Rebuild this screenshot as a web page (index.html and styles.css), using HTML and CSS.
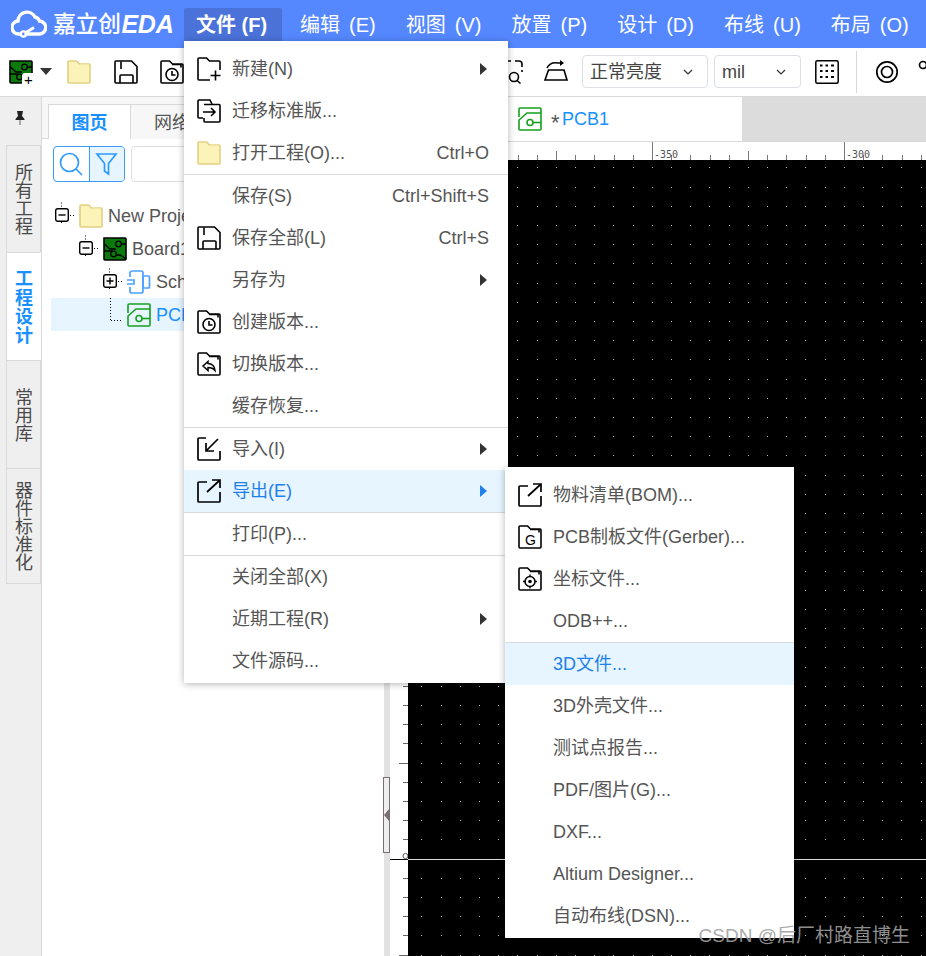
FILE: index.html
```html
<!DOCTYPE html>
<html lang="zh">
<head>
<meta charset="utf-8">
<title>嘉立创EDA</title>
<link rel="stylesheet" href="styles.css">
</head>
<body>
<svg class="sprite" width="0" height="0">
  <defs>
    <symbol id="i-folder" viewBox="0 0 24 24"><path d="M2 1h7.5l3 3H22a1 1 0 0 1 1 1v17a1 1 0 0 1-1 1H2a1 1 0 0 1-1-1V2a1 1 0 0 1 1-1z" fill="#fbf3b8" stroke="#e2cf82" stroke-width="1.6"/><path d="M12.5 4.5H22" stroke="#f3e7a5" stroke-width="1.4"/></symbol>
    <symbol id="i-new" viewBox="0 0 24 24"><path d="M13 23H2a1 1 0 0 1-1-1V2a1 1 0 0 1 1-1h7.5l3 3H22a1 1 0 0 1 1 1v8M12 4h8" fill="none" stroke="#000" stroke-width="1.6"/><path d="M18.500 13.500v10M13.500 18.500h10" stroke="#000" stroke-width="1.6"/></symbol>
    <symbol id="i-move" viewBox="0 0 24 24"><path d="M6 19H2a1 1 0 0 1-1-1V2a1 1 0 0 1 1-1h11l2 4" fill="none" stroke="#000" stroke-width="1.6"/><path d="M7 5.500h15a1 1 0 0 1 1 1V22a1 1 0 0 1-1 1H8a1 1 0 0 1-1-1v-3" fill="none" stroke="#000" stroke-width="1.6"/><path d="M6 13h12M14 9l4 4-4 4" fill="none" stroke="#000" stroke-width="1.6"/></symbol>
    <symbol id="i-save" viewBox="0 0 24 24"><path d="M2 1h15.500L23 6.500V22a1 1 0 0 1-1 1H2a1 1 0 0 1-1-1V2a1 1 0 0 1 1-1z" fill="none" stroke="#000" stroke-width="1.6"/><path d="M6 23v-7a1 1 0 0 1 1-1h11a1 1 0 0 1 1 1v7M7 1.500V9" fill="none" stroke="#000" stroke-width="1.6"/></symbol>
    <symbol id="i-fclock" viewBox="0 0 24 24"><path d="M2 1h7.500l3 3H22a1 1 0 0 1 1 1v17a1 1 0 0 1-1 1H2a1 1 0 0 1-1-1V2a1 1 0 0 1 1-1zM12 4.500h9v3" fill="none" stroke="#000" stroke-width="1.6"/><circle cx="12" cy="14.500" r="6" fill="none" stroke="#000" stroke-width="1.6"/><path d="M12 11v4h3.500" fill="none" stroke="#000" stroke-width="1.6"/></symbol>
    <symbol id="i-fback" viewBox="0 0 24 24"><path d="M2 1h7.500l3 3H22a1 1 0 0 1 1 1v17a1 1 0 0 1-1 1H2a1 1 0 0 1-1-1V2a1 1 0 0 1 1-1zM12 4.500h9v3" fill="none" stroke="#000" stroke-width="1.600"/><path d="M11 9.500l-5 4.500 5 4.500v-3c3 0 5 .5 7 3 0-4-3-7-7-7z" fill="none" stroke="#000" stroke-width="1.500"/></symbol>
    <symbol id="i-fg" viewBox="0 0 24 24"><path d="M2 1h7.500l3 3H22a1 1 0 0 1 1 1v17a1 1 0 0 1-1 1H2a1 1 0 0 1-1-1V2a1 1 0 0 1 1-1zM12 4.500h9v3" fill="none" stroke="#000" stroke-width="1.600"/></symbol>
    <symbol id="i-ftarget" viewBox="0 0 24 24"><path d="M2 1h7.500l3 3H22a1 1 0 0 1 1 1v17a1 1 0 0 1-1 1H2a1 1 0 0 1-1-1V2a1 1 0 0 1 1-1zM12 4.500h9v3" fill="none" stroke="#000" stroke-width="1.600"/><circle cx="12" cy="14.500" r="5" fill="none" stroke="#000" stroke-width="1.500"/><circle cx="12" cy="14.500" r="1.800" fill="#000"/><path d="M12 7.500v2.500M12 19v2.500M5 14.500h2.500M16.500 14.500H19" stroke="#000" stroke-width="1.400"/></symbol>
    <symbol id="i-import" viewBox="0 0 24 24"><path d="M9 1H2a1 1 0 0 0-1 1v20a1 1 0 0 0 1 1h20a1 1 0 0 0 1-1v-8" fill="none" stroke="#000" stroke-width="1.700"/><path d="M21 2L9.500 13.500M9 6v8h8" fill="none" stroke="#000" stroke-width="1.700"/></symbol>
    <symbol id="i-export" viewBox="0 0 24 24"><path d="M10 3H2a1 1 0 0 0-1 1v18a1 1 0 0 0 1 1h20a1 1 0 0 0 1-1v-9" fill="none" stroke="#000" stroke-width="1.700"/><path d="M10 13L22.500 1.500M15 1h8v8" fill="none" stroke="#000" stroke-width="1.700"/></symbol>
    <symbol id="i-pcbg" viewBox="0 0 24 24"><path d="M1 1h21a1 1 0 0 1 1 1v20a1 1 0 0 1-1 1H2a1 1 0 0 1-1-1z" fill="#0a7a0a" stroke="#000" stroke-width="1.600"/><path d="M1.500 7L7 12h6M23 7h-5M1.500 14h8M13 18h4l6 4" fill="none" stroke="#000" stroke-width="1.300"/><circle cx="15.500" cy="7" r="2.800" fill="none" stroke="#000" stroke-width="1.300"/><circle cx="10.500" cy="17" r="2.800" fill="none" stroke="#000" stroke-width="1.300"/></symbol>
    <symbol id="i-pcb" viewBox="0 0 24 24"><path d="M2 1h20a1 1 0 0 1 1 1v20a1 1 0 0 1-1 1H2a1 1 0 0 1-1-1V13l8-7h14M1 10V2a1 1 0 0 1 1-1" fill="none" stroke="#16a01e" stroke-width="1.600"/><circle cx="12" cy="15.500" r="3" fill="none" stroke="#16a01e" stroke-width="1.600"/><path d="M15 15.500h8" stroke="#16a01e" stroke-width="1.600"/></symbol>
    <symbol id="i-sch" viewBox="0 0 24 24"><path d="M3 7V3a2 2 0 0 1 2-2h9a2 2 0 0 1 2 2v18a2 2 0 0 1-2 2H5a2 2 0 0 1-2-2v-4" fill="none" stroke="#4aa3ff" stroke-width="1.700"/><path d="M0 10h7v4H0" fill="none" stroke="#4aa3ff" stroke-width="1.700"/><rect x="16" y="6" width="6.500" height="12" rx="1" fill="none" stroke="#4aa3ff" stroke-width="1.700"/></symbol>
    <symbol id="i-minus" viewBox="0 0 24 33"><path d="M6.500 3.500v4M6.500 23v3" stroke="#000" stroke-width="1" stroke-dasharray="1 2"/><rect x=".7" y="9.700" width="12.600" height="12.600" rx="2" fill="#fff" stroke="#000" stroke-width="1.400"/><path d="M3.500 16h7" stroke="#000" stroke-width="1.400"/><path d="M15 16.500h6" stroke="#000" stroke-width="1" stroke-dasharray="1 2"/></symbol>
    <symbol id="i-plus" viewBox="0 0 24 33"><path d="M6.500 3.500v4M6.500 23v3" stroke="#000" stroke-width="1" stroke-dasharray="1 2"/><rect x=".7" y="9.700" width="12.600" height="12.600" rx="2" fill="#fff" stroke="#000" stroke-width="1.400"/><path d="M3.500 16h7M7 12.500v7" stroke="#000" stroke-width="1.400"/><path d="M15 16.500h6" stroke="#000" stroke-width="1" stroke-dasharray="1 2"/></symbol>
    <symbol id="i-leaf" viewBox="0 0 24 33"><path d="M7.500 0v23M8 22.500h12" stroke="#000" stroke-width="1" stroke-dasharray="1 2" fill="none"/></symbol>
    <pattern id="dots" width="96" height="96" patternUnits="userSpaceOnUse">
      <g fill="#c4c4c4" shape-rendering="crispEdges">
        <rect x="13" y="7" width="1" height="1"/><rect x="33" y="7" width="1" height="1"/><rect x="52" y="7" width="1" height="1"/><rect x="71" y="7" width="1" height="1"/><rect x="90" y="7" width="1" height="1"/>
        <rect x="13" y="27" width="1" height="1"/><rect x="33" y="27" width="1" height="1"/><rect x="52" y="27" width="1" height="1"/><rect x="71" y="27" width="1" height="1"/><rect x="90" y="27" width="1" height="1"/>
        <rect x="13" y="46" width="1" height="1"/><rect x="33" y="46" width="1" height="1"/><rect x="52" y="46" width="1" height="1"/><rect x="71" y="46" width="1" height="1"/><rect x="90" y="46" width="1" height="1"/>
        <rect x="13" y="65" width="1" height="1"/><rect x="33" y="65" width="1" height="1"/><rect x="52" y="65" width="1" height="1"/><rect x="71" y="65" width="1" height="1"/><rect x="90" y="65" width="1" height="1"/>
        <rect x="13" y="84" width="1" height="1"/><rect x="33" y="84" width="1" height="1"/><rect x="52" y="84" width="1" height="1"/><rect x="71" y="84" width="1" height="1"/><rect x="90" y="84" width="1" height="1"/>
      </g>
    </pattern>
    <pattern id="hticks" x="52" width="192" height="18" patternUnits="userSpaceOnUse">
      <g fill="#777" shape-rendering="crispEdges">
        <rect x="0" y="0" width="1" height="18"/><rect x="19" y="13" width="1" height="5"/><rect x="38" y="13" width="1" height="5"/><rect x="58" y="13" width="1" height="5"/><rect x="77" y="13" width="1" height="5"/><rect x="96" y="9" width="1" height="9"/><rect x="115" y="13" width="1" height="5"/><rect x="134" y="13" width="1" height="5"/><rect x="154" y="13" width="1" height="5"/><rect x="173" y="13" width="1" height="5"/>
      </g>
    </pattern>
    <pattern id="vticks" width="18" height="96" patternUnits="userSpaceOnUse">
      <g fill="#666" shape-rendering="crispEdges">
        <rect x="13" y="7" width="5" height="1"/><rect x="9" y="27" width="9" height="1"/><rect x="13" y="46" width="5" height="1"/><rect x="13" y="65" width="5" height="1"/><rect x="13" y="84" width="5" height="1"/>
      </g>
    </pattern>
  </defs>
</svg>

<div class="app">
  <header class="topbar">
    <div class="logo">
      <svg class="logo-mark" viewBox="0 0 36 28"><path d="M9 24H8a6.500 6.500 0 0 1-1-13 9 9 0 0 1 17-4 6.500 6.500 0 0 1 4.500 4 6.500 6.500 0 0 1-.5 13H15" fill="none" stroke="#fff" stroke-width="3.400" stroke-linecap="round"/><circle cx="12.500" cy="24" r="2.600" fill="none" stroke="#fff" stroke-width="2.400"/><path d="M15 22.500l8-5" stroke="#fff" stroke-width="2.800"/></svg>
      <span class="logo-cn">嘉立创</span><span class="logo-en">EDA</span>
    </div>
    <nav class="mainnav">
      <span class="nav-item nav-active">文件 (F)</span>
      <span class="nav-item">编辑 (E)</span>
      <span class="nav-item">视图 (V)</span>
      <span class="nav-item">放置 (P)</span>
      <span class="nav-item">设计 (D)</span>
      <span class="nav-item">布线 (U)</span>
      <span class="nav-item">布局 (O)</span>
    </nav>
  </header>

  <div class="toolbar">
    <span class="tool-new">
      <svg class="ic"><use href="#i-pcbg"/></svg>
      <span class="tool-new-plus">+</span>
    </span>
    <span class="caret"></span>
    <svg class="ic t-folder"><use href="#i-folder"/></svg>
    <svg class="ic t-save"><use href="#i-save"/></svg>
    <svg class="ic t-clock"><use href="#i-fclock"/></svg>
    <svg class="ic t-zoom" viewBox="0 0 24 24"><path d="M1 1h3M8 1h4M16 1h4a3 3 0 0 1 3 3v3M23 10v2M1 1v3M1 8v4" fill="none" stroke="#000" stroke-width="1.600"/><circle cx="15" cy="17" r="4.500" fill="none" stroke="#000" stroke-width="1.600"/><path d="M18 20.500l3.500 3" stroke="#000" stroke-width="1.600"/></svg>
    <svg class="ic t-flip" viewBox="0 0 24 24"><path d="M3 8c2-4 6-6 11-5h5" fill="none" stroke="#000" stroke-width="1.600"/><path d="M16 0l4 3-4 3z" fill="#000"/><path d="M1 20l3.500-10H20l3 10zM1 20h22" fill="none" stroke="#000" stroke-width="1.600"/></svg>
    <span class="select sel-wide">正常亮度<svg class="chev" viewBox="0 0 10 6"><path d="M1 1l4 4 4-4" fill="none" stroke="#333" stroke-width="1.200"/></svg></span>
    <span class="select sel-unit">mil<svg class="chev" viewBox="0 0 10 6"><path d="M1 1l4 4 4-4" fill="none" stroke="#333" stroke-width="1.200"/></svg></span>
    <svg class="ic t-grid" viewBox="0 0 24 24"><rect x=".8" y=".8" width="22.400" height="22.400" rx="1.500" fill="none" stroke="#000" stroke-width="1.500"/><path d="M5 5.500h2.500M10.500 5.500H13M16 5.500h3M5 11h2.500M10.500 11H13M16 11h3M5 17h2.500M10.500 17H13M16 17h3" stroke="#000" stroke-width="2.200"/></svg>
    <span class="tool-sep"></span>
    <svg class="ic t-ring" viewBox="0 0 24 24"><circle cx="12" cy="12" r="10.200" fill="none" stroke="#000" stroke-width="1.700"/><circle cx="12" cy="12" r="5.500" fill="none" stroke="#000" stroke-width="1.700"/></svg>
    <svg class="ic t-last" viewBox="0 0 24 24"><circle cx="5" cy="5" r="3.500" fill="none" stroke="#000" stroke-width="1.700"/></svg>
  </div>

  <div class="main">
    <aside class="rail">
      <div class="pin"><svg class="pin-ic" viewBox="0 0 12 16"><path d="M3 1h6l-1 5 2.500 3v1h-9V9L4 6z" fill="#222"/><path d="M6 10v5" stroke="#777" stroke-width="1.200"/></svg></div>
      <div class="rail-tab rail-first">所有工程</div>
      <div class="rail-tab rail-on">工程设计</div>
      <div class="rail-tab">常用库</div>
      <div class="rail-tab">器件标准化</div>
    </aside>

    <section class="panel">
      <div class="panel-tabs">
        <span class="ptab ptab-on">图页</span>
        <span class="ptab">网络</span>
      </div>
      <div class="searchbar">
        <span class="search-btns">
          <span class="sbtn"><svg class="sbtn-ic" viewBox="0 0 24 24"><circle cx="10.500" cy="10.500" r="9" fill="none" stroke="#2f9bff" stroke-width="1.700"/><path d="M17 17l6 6" stroke="#2f9bff" stroke-width="1.700"/></svg></span>
          <span class="sbtn sbtn-on"><svg class="sbtn-ic" viewBox="0 0 24 24"><path d="M2 2h19l-7.500 9.500V22l-4-3v-7.500z" fill="none" stroke="#2f9bff" stroke-width="1.700"/></svg></span>
        </span>
        <span class="search-input"></span>
      </div>
      <ul class="tree">
        <li class="row lvl0"><svg class="exp"><use href="#i-minus"/></svg><svg class="ic"><use href="#i-folder"/></svg><span class="row-t">New Project</span></li>
        <li class="row lvl1"><svg class="exp"><use href="#i-minus"/></svg><svg class="ic"><use href="#i-pcbg"/></svg><span class="row-t">Board1</span></li>
        <li class="row lvl2"><svg class="exp"><use href="#i-plus"/></svg><svg class="ic"><use href="#i-sch"/></svg><span class="row-t">Schematic1</span></li>
        <li class="row lvl2 row-on"><svg class="exp"><use href="#i-leaf"/></svg><svg class="ic"><use href="#i-pcb"/></svg><span class="row-t">PCB1</span></li>
      </ul>
    </section>

    <div class="splitter"><span class="grip"><span class="grip-arrow"></span></span></div>

    <section class="work">
      <div class="doc-tabs">
        <span class="doc-tab"><svg class="ic"><use href="#i-pcb"/></svg><span class="doc-star">*</span><span class="doc-name">PCB1</span></span>
      </div>
      <div class="hruler-row">
        <svg class="hruler" width="518" height="18">
          <rect width="518" height="18" fill="url(#hticks)"/>
          <text class="tick-t" x="246" y="16">-350</text>
          <text class="tick-t" x="438" y="16">-300</text>
        </svg>
      </div>
      <div class="stage">
        <svg class="vruler" width="18" height="796"><rect width="18" height="796" fill="url(#vticks)"/><rect x="0" y="699" width="18" height="1" fill="#000"/><circle cx="15.500" cy="696" r="2.500" fill="#fff" stroke="#555"/></svg>
        <div class="canvas">
          <svg class="grid" width="518" height="796"><rect width="518" height="796" fill="url(#dots)"/><rect y="699" width="518" height="1" fill="#ddd"/></svg>
        </div>
      </div>
    </section>
  </div>

  <div class="menu menu-file">
    <div class="mi"><svg class="ic mi-ic"><use href="#i-new"/></svg><span class="mi-t">新建(N)</span><span class="tri"></span></div>
    <div class="mi"><svg class="ic mi-ic"><use href="#i-move"/></svg><span class="mi-t">迁移标准版...</span></div>
    <div class="mi"><svg class="ic mi-ic"><use href="#i-folder"/></svg><span class="mi-t">打开工程(O)...</span><span class="kbd">Ctrl+O</span></div>
    <div class="msep"></div>
    <div class="mi"><span class="mi-t">保存(S)</span><span class="kbd">Ctrl+Shift+S</span></div>
    <div class="mi"><svg class="ic mi-ic"><use href="#i-save"/></svg><span class="mi-t">保存全部(L)</span><span class="kbd">Ctrl+S</span></div>
    <div class="mi"><span class="mi-t">另存为</span><span class="tri"></span></div>
    <div class="mi"><svg class="ic mi-ic"><use href="#i-fclock"/></svg><span class="mi-t">创建版本...</span></div>
    <div class="mi"><svg class="ic mi-ic"><use href="#i-fback"/></svg><span class="mi-t">切换版本...</span></div>
    <div class="mi"><span class="mi-t">缓存恢复...</span></div>
    <div class="msep"></div>
    <div class="mi"><svg class="ic mi-ic"><use href="#i-import"/></svg><span class="mi-t">导入(I)</span><span class="tri"></span></div>
    <div class="mi mi-on"><svg class="ic mi-ic"><use href="#i-export"/></svg><span class="mi-t">导出(E)</span><span class="tri"></span></div>
    <div class="msep"></div>
    <div class="mi"><span class="mi-t">打印(P)...</span></div>
    <div class="msep"></div>
    <div class="mi"><span class="mi-t">关闭全部(X)</span></div>
    <div class="mi"><span class="mi-t">近期工程(R)</span><span class="tri"></span></div>
    <div class="mi"><span class="mi-t">文件源码...</span></div>
  </div>

  <div class="menu menu-export">
    <div class="mi"><svg class="ic mi-ic"><use href="#i-export"/></svg><span class="mi-t">物料清单(BOM)...</span></div>
    <div class="mi"><span class="ic-wrap"><svg class="ic"><use href="#i-fg"/></svg><span class="ic-g">G</span></span><span class="mi-t">PCB制板文件(Gerber)...</span></div>
    <div class="mi"><svg class="ic mi-ic"><use href="#i-ftarget"/></svg><span class="mi-t">坐标文件...</span></div>
    <div class="mi"><span class="mi-t">ODB++...</span></div>
    <div class="msep"></div>
    <div class="mi mi-on"><span class="mi-t">3D文件...</span></div>
    <div class="mi"><span class="mi-t">3D外壳文件...</span></div>
    <div class="mi"><span class="mi-t">测试点报告...</span></div>
    <div class="mi"><span class="mi-t">PDF/图片(G)...</span></div>
    <div class="mi"><span class="mi-t">DXF...</span></div>
    <div class="mi"><span class="mi-t">Altium Designer...</span></div>
    <div class="mi"><span class="mi-t">自动布线(DSN)...</span></div>
  </div>

  <div class="watermark">CSDN @后厂村路直博生</div>
</div>
</body>
</html>
```

FILE: styles.css
```css
* { box-sizing: border-box; }
html, body { margin: 0; padding: 0; }
body {
  font-family: "Liberation Sans", "Noto Sans CJK SC", sans-serif;
  font-size: 18px;
  line-height: 22px;
  color: #555;
  background: #fff;
}
.sprite { position: absolute; }
.app {
  position: relative;
  width: 926px;
  height: 956px;
  overflow: hidden;
  display: flex;
  flex-direction: column;
}
.ic { width: 24px; height: 24px; flex: none; display: block; }

/* top bar */
.topbar {
  height: 48px;
  flex: none;
  background: #5588ff;
  display: flex;
  align-items: flex-start;
  color: #fff;
  overflow: hidden;
}
.logo {
  width: 184px;
  height: 48px;
  flex: none;
  padding-left: 11px;
  display: flex;
  align-items: center;
}
.logo-mark { width: 36px; height: 28px; flex: none; margin-right: 6px; }
.logo-cn { font-size: 23px; font-weight: 500; letter-spacing: -.5px; }
.logo-en { font-size: 25px; font-weight: 700; font-style: italic; letter-spacing: -.3px; margin-left: 1px; }
.mainnav { display: flex; gap: 6px; padding-top: 8px; white-space: nowrap; }
.nav-item {
  height: 33px;
  line-height: 35px;
  padding: 0 12px;
  font-size: 20px;
  word-spacing: 3.5px;
  border-radius: 2px 2px 0 0;
}
.nav-active { background: #4a72d8; font-weight: 700; width: 98px; word-spacing: 0; }

/* toolbar */
.toolbar {
  height: 49px;
  flex: none;
  display: flex;
  align-items: center;
  padding-left: 9px;
  border-bottom: 1px solid #d9d9d9;
  overflow: hidden;
  padding-bottom: 1px;
}
.tool-new { position: relative; width: 24px; height: 24px; flex: none; }
.tool-new-plus {
  position: absolute;
  right: -2px;
  bottom: -2px;
  width: 13px;
  height: 13px;
  background: #fff;
  color: #000;
  font-size: 15px;
  line-height: 13px;
  text-align: center;
  border-radius: 3px 0 0 0;
}
.caret {
  width: 0;
  height: 0;
  margin-left: 7px;
  border-left: 6px solid transparent;
  border-right: 6px solid transparent;
  border-top: 7px solid #333;
}
.t-folder { margin-left: 15px; }
.t-save { margin-left: 23px; }
.t-clock { margin-left: 22px; }
.t-zoom { margin-left: 315px; }
.t-flip { margin-left: 21px; }
.select {
  height: 33px;
  margin-left: 14px;
  padding: 0 14px 0 7px;
  border: 1px solid #dcdfe6;
  border-radius: 4px;
  display: flex;
  align-items: center;
  justify-content: space-between;
  color: #444;
  flex: none;
}
.sel-wide { width: 126px; }
.sel-unit { width: 87px; margin-left: 6px; }
.chev { width: 10px; height: 6px; }
.t-grid { margin-left: 14px; }
.tool-sep { width: 1px; height: 42px; background: #d9d9d9; margin-left: 17px; flex: none; }
.t-ring { margin-left: 18px; }
.t-last { margin-left: 19px; }

/* main */
.main { flex: 1; display: flex; min-height: 0; }

.rail {
  width: 42px;
  flex: none;
  background: #efefef;
  border-right: 1px solid #d9d9d9;
  padding-left: 6px;
}
.pin { height: 48px; margin-left: -6px; padding: 13px 0 0 14px; }
.pin-ic { width: 12px; height: 16px; display: block; }
.rail-tab {
  margin-right: -1px;
  min-height: 108px;
  padding: 12px 3px 12px 0;
  border: 1px solid #d9d9d9;
  border-width: 1px 1px 0 1px;
  display: flex;
  justify-content: center;
  align-items: center;
  writing-mode: vertical-rl;
  text-orientation: upright;
  line-height: 30px;
  color: #4a4a4a;
  background: #efefef;
}
.rail-tab:last-child { border-bottom-width: 1px; }
.rail-first { min-height: 107px; }
.rail-on {
  background: #fff;
  color: #1890ff;
  font-weight: 700;
  border-right-color: #fff;
  letter-spacing: 1px;
}

.panel { width: 342px; flex: none; background: #fff; }
.panel-tabs {
  height: 42px;
  padding: 7px 0 0 6px;
  display: flex;
  background: #f7f7f7;
  border-bottom: 1px solid #d9d9d9;
}
.ptab {
  width: 83px;
  height: 35px;
  line-height: 36px;
  text-align: center;
  border: 1px solid #d9d9d9;
  border-width: 1px 1px 0 0;
  background: #f7f7f7;
}
.ptab-on {
  background: #fff;
  color: #1890ff;
  font-weight: 700;
  border-left-width: 1px;
}
.searchbar { padding: 7px 11px 0 11px; display: flex; gap: 6px; height: 43px; }
.search-btns {
  width: 72px;
  height: 36px;
  border: 1px solid #3a9dfb;
  border-radius: 4px;
  display: flex;
  flex: none;
  overflow: hidden;
}
.sbtn { flex: 1; display: flex; align-items: center; justify-content: center; }
.sbtn-on { background: #e6f5ff; border-left: 1px solid #3a9dfb; }
.sbtn-ic { width: 24px; height: 24px; }
.search-input { flex: 1; height: 36px; border: 1px solid #dcdfe6; border-radius: 4px; }
.tree { list-style: none; margin: 17px 0 0; padding: 0 0 0 9px; }
.row { height: 33px; display: flex; align-items: center; white-space: nowrap; }
.exp { width: 24px; height: 33px; flex: none; }
.row-t { margin-left: 5px; }
.lvl0 { padding-left: 4px; }
.lvl1 { padding-left: 28px; }
.lvl2 { padding-left: 52px; }
.row-on { background: #e6f5ff; color: #1890ff; }

.splitter {
  width: 6px;
  flex: none;
  background: #e2e2e2;
  position: relative;
}
.grip {
  position: absolute;
  left: -1px;
  top: 680px;
  width: 7px;
  height: 76px;
  background: #eee;
  border: 1px solid #7a6f72;
  display: flex;
  align-items: center;
}
.grip-arrow {
  width: 0;
  height: 0;
  border-top: 6px solid transparent;
  border-bottom: 6px solid transparent;
  border-right: 5px solid #7a6f72;
}

.work { flex: 1; display: flex; flex-direction: column; min-width: 0; background: #fff; }
.doc-tabs { height: 45px; flex: none; background: #dcdcdc; border-bottom: 1px solid #d9d9d9; display: flex; }
.doc-tab {
  width: 352px;
  background: #fff;
  display: flex;
  align-items: center;
  padding-left: 128px;
  color: #1890ff;
}
.doc-star {
  width: 10px;
  margin-left: 9px;
  margin-right: 1px;
  color: #555;
  font-size: 22px;
  transform: translateY(4px);
}
.hruler-row { height: 18px; flex: none; padding-left: 18px; }
.hruler { display: block; }
.tick-t { font-family: "DejaVu Sans Mono", monospace; font-size: 10px; fill: #555; }
.stage { flex: 1; display: flex; min-height: 0; }
.vruler { display: block; flex: none; }
.canvas { flex: 1; background: #000; overflow: hidden; }
.grid { display: block; }

/* menus */
.menu {
  position: absolute;
  background: #fff;
  box-shadow: 0 1px 7px rgba(0, 0, 0, .3);
  white-space: nowrap;
}
.menu-file { left: 184px; top: 41px; width: 324px; padding: 7px 0 1px; }
.menu-export { left: 505px; top: 467px; width: 289px; padding: 7px 0 1px; }
.mi {
  height: 42px;
  display: flex;
  align-items: center;
  padding-left: 48px;
  position: relative;
  color: #555;
}
.mi-ic { position: absolute; left: 13px; top: 9px; }
.ic-wrap { position: absolute; left: 13px; top: 9px; width: 24px; height: 24px; }
.ic-g { position: absolute; left: 7px; top: 8px; font-size: 14px; line-height: 14px; color: #000; }
.mi-t { flex: 1; }
.kbd { margin-right: 19px; }
.tri {
  width: 0;
  height: 0;
  margin-right: 21px;
  border-top: 6px solid transparent;
  border-bottom: 6px solid transparent;
  border-left: 7px solid #333;
}
.mi-on { background: #e6f5ff; color: #1e80e8; }
.mi-on .tri { border-left-color: #1e80e8; }
.msep { height: 1px; background: #d9d9d9; }

.watermark {
  position: absolute;
  right: 16px;
  bottom: 8px;
  color: rgba(160, 160, 160, .9);
  font-size: 19px;
  line-height: 24px;
}
```
